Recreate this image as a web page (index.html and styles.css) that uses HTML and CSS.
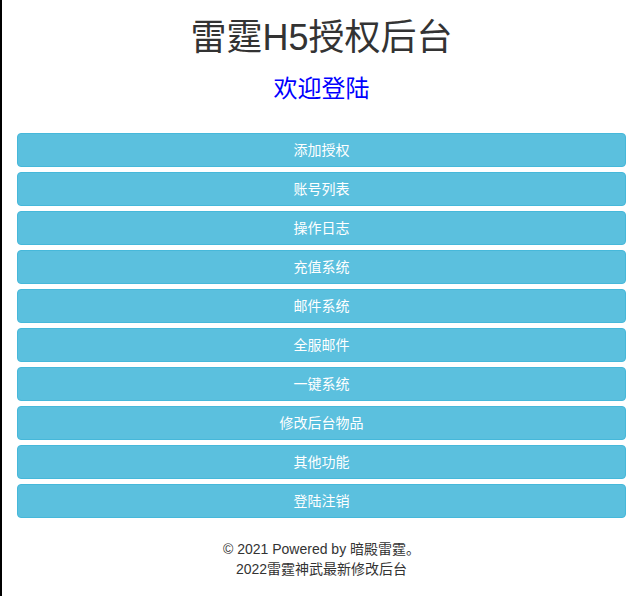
FILE: index.html
```html
<!DOCTYPE html>
<html lang="zh-CN">
<head>
<meta charset="utf-8">
<title>雷霆H5授权后台</title>
<link rel="stylesheet" href="styles.css">
</head>
<body>
<div class="page">
  <div class="container">
    <h1 class="title">雷霆H5授权后台</h1>
    <h3 class="subtitle">欢迎登陆</h3>
    <nav class="menu">
      <a class="btn" href="#">添加授权</a>
      <a class="btn" href="#">账号列表</a>
      <a class="btn" href="#">操作日志</a>
      <a class="btn" href="#">充值系统</a>
      <a class="btn" href="#">邮件系统</a>
      <a class="btn" href="#">全服邮件</a>
      <a class="btn" href="#">一键系统</a>
      <a class="btn" href="#">修改后台物品</a>
      <a class="btn" href="#">其他功能</a>
      <a class="btn" href="#">登陆注销</a>
    </nav>
    <footer class="footer">
      <p>© 2021 Powered by 暗殿雷霆。</p>
      <p>2022雷霆神武最新修改后台</p>
    </footer>
  </div>
</div>
</body>
</html>
```

FILE: styles.css
```css
html, body {
  margin: 0;
  padding: 0;
  background: #fff;
}
body {
  font-family: "Liberation Sans", "Noto Sans CJK SC", sans-serif;
  font-size: 14px;
  line-height: 1.42857;
  color: #333;
}
.page {
  display: flow-root;
  border-left: 2px solid #000;
  min-height: 596px;
  box-sizing: border-box;
}
.container {
  padding: 0 15px;
}
.title {
  margin: 18px 0 0;
  font-size: 36px;
  line-height: 1.1;
  font-weight: 400;
  text-align: center;
  color: #333;
}
.subtitle {
  margin: 18px 0 0;
  font-size: 24px;
  line-height: 1.1;
  font-weight: 400;
  text-align: center;
  color: #0000ff;
}
.menu {
  display: flex;
  flex-direction: column;
  gap: 5px;
  margin-top: 31px;
}
.btn {
  display: block;
  box-sizing: border-box;
  height: 34px;
  padding: 6px 12px;
  font-size: 14px;
  line-height: 20px;
  text-align: center;
  color: #fff;
  text-decoration: none;
  background: #5bc0de;
  border: 1px solid #46b8da;
  border-radius: 4px;
}
.footer {
  margin-top: 22px;
  text-align: center;
  color: #333;
}
.footer p {
  margin: 0;
}
```
